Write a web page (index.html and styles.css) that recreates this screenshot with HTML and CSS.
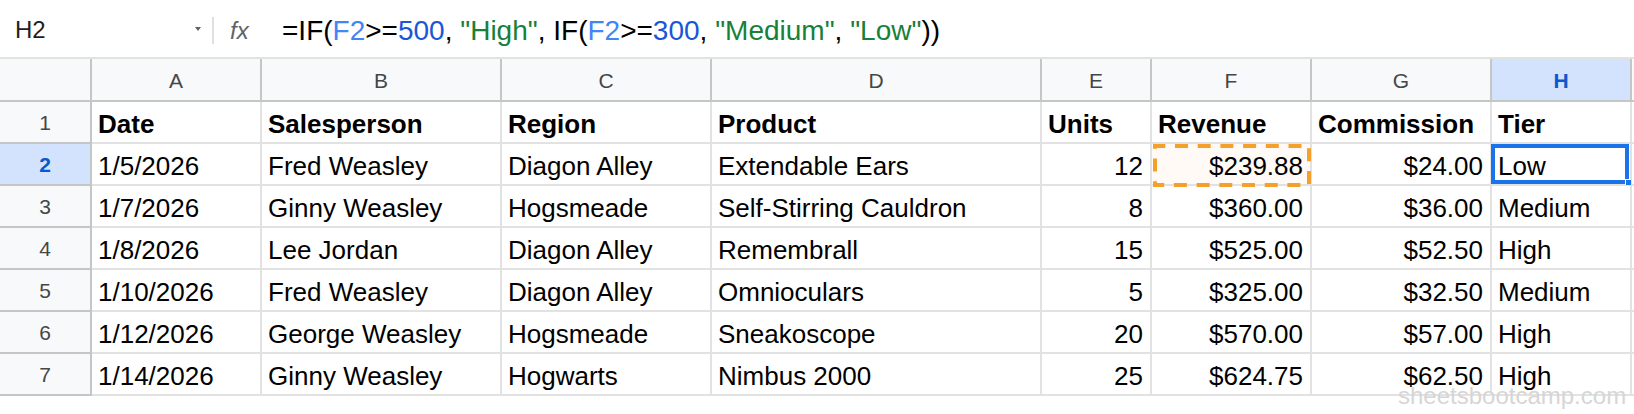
FILE: index.html
```html
<!DOCTYPE html>
<html>
<head>
<meta charset="utf-8">
<link rel="stylesheet" href="styles.css">
</head>
<body>
<div class="app">
  <div class="formula-bar">
    <div class="name-box"><span class="name">H2</span><span class="caret"></span></div>
    <div class="sep"></div>
    <div class="fx">fx</div>
    <div class="formula">=IF(<span class="ref">F2</span>&gt;=<span class="num">500</span>, <span class="str">"High"</span>, IF(<span class="ref">F2</span>&gt;=<span class="num">300</span>, <span class="str">"Medium"</span>, <span class="str">"Low"</span>))</div>
  </div>
  <div class="grid">
    <div class="corner"></div>
    <div class="colhead">A</div>
    <div class="colhead">B</div>
    <div class="colhead">C</div>
    <div class="colhead">D</div>
    <div class="colhead">E</div>
    <div class="colhead">F</div>
    <div class="colhead">G</div>
    <div class="colhead selected">H</div>
    <div class="colhead rest"></div>

    <div class="rowhead">1</div>
    <div class="cell bold">Date</div>
    <div class="cell bold">Salesperson</div>
    <div class="cell bold">Region</div>
    <div class="cell bold">Product</div>
    <div class="cell bold">Units</div>
    <div class="cell bold">Revenue</div>
    <div class="cell bold">Commission</div>
    <div class="cell bold">Tier</div>
    <div class="cell rest"></div>

    <div class="rowhead selected">2</div>
    <div class="cell">1/5/2026</div>
    <div class="cell">Fred Weasley</div>
    <div class="cell">Diagon Alley</div>
    <div class="cell">Extendable Ears</div>
    <div class="cell num">12</div>
    <div class="cell num copied">$239.88<svg class="marquee" width="158" height="43" viewBox="0 0 158 43"><rect x="2" y="2" width="154" height="39" fill="none" stroke="#f5a02a" stroke-width="4" stroke-dasharray="13 9.7" stroke-dashoffset="2.7"/></svg></div>
    <div class="cell num">$24.00</div>
    <div class="cell active">Low<span class="sel-box"></span><span class="handle"></span></div>
    <div class="cell rest"></div>

    <div class="rowhead">3</div>
    <div class="cell">1/7/2026</div>
    <div class="cell">Ginny Weasley</div>
    <div class="cell">Hogsmeade</div>
    <div class="cell">Self-Stirring Cauldron</div>
    <div class="cell num">8</div>
    <div class="cell num">$360.00</div>
    <div class="cell num">$36.00</div>
    <div class="cell">Medium</div>
    <div class="cell rest"></div>

    <div class="rowhead">4</div>
    <div class="cell">1/8/2026</div>
    <div class="cell">Lee Jordan</div>
    <div class="cell">Diagon Alley</div>
    <div class="cell">Remembrall</div>
    <div class="cell num">15</div>
    <div class="cell num">$525.00</div>
    <div class="cell num">$52.50</div>
    <div class="cell">High</div>
    <div class="cell rest"></div>

    <div class="rowhead">5</div>
    <div class="cell">1/10/2026</div>
    <div class="cell">Fred Weasley</div>
    <div class="cell">Diagon Alley</div>
    <div class="cell">Omnioculars</div>
    <div class="cell num">5</div>
    <div class="cell num">$325.00</div>
    <div class="cell num">$32.50</div>
    <div class="cell">Medium</div>
    <div class="cell rest"></div>

    <div class="rowhead">6</div>
    <div class="cell">1/12/2026</div>
    <div class="cell">George Weasley</div>
    <div class="cell">Hogsmeade</div>
    <div class="cell">Sneakoscope</div>
    <div class="cell num">20</div>
    <div class="cell num">$570.00</div>
    <div class="cell num">$57.00</div>
    <div class="cell">High</div>
    <div class="cell rest"></div>

    <div class="rowhead">7</div>
    <div class="cell">1/14/2026</div>
    <div class="cell">Ginny Weasley</div>
    <div class="cell">Hogwarts</div>
    <div class="cell">Nimbus 2000</div>
    <div class="cell num">25</div>
    <div class="cell num">$624.75</div>
    <div class="cell num">$62.50</div>
    <div class="cell">High</div>
    <div class="cell rest"></div>
  </div>
  <div class="watermark">sheetsbootcamp.com</div>
</div>
</body>
</html>
```

FILE: styles.css
```css
html, body {
  margin: 0;
  padding: 0;
  background: #ffffff;
}

.app {
  position: relative;
  width: 1634px;
  height: 414px;
  overflow: hidden;
  font-family: "Liberation Sans", Arial, sans-serif;
  color: #000000;
}

/* ---------- formula bar ---------- */
.formula-bar {
  display: flex;
  align-items: center;
  height: 59px;
  box-sizing: border-box;
  padding-top: 4px;
  border-bottom: 2px solid #e1e3e1;
  white-space: nowrap;
}

.name-box {
  width: 212px;
  box-sizing: border-box;
  padding-left: 15px;
  display: flex;
  align-items: center;
  font-size: 24px;
  color: #1f1f1f;
}

.name {
  position: relative;
  top: -1px;
}

.caret {
  margin-left: auto;
  margin-right: 11px;
  margin-bottom: 3px;
  width: 0;
  height: 0;
  border-left: 3px solid transparent;
  border-right: 3px solid transparent;
  border-top: 4px solid #5f6368;
}

.sep {
  width: 2px;
  height: 27px;
  background: #e0e0e0;
}

.fx {
  margin-left: 16px;
  width: 52px;
  font-size: 24px;
  font-style: italic;
  color: #5f6368;
}

.formula {
  font-size: 28px;
  color: #000000;
}

.formula .ref { color: #4285f4; }
.formula .num { color: #1a56d6; }
.formula .str { color: #188038; }

/* ---------- grid ---------- */
.grid {
  display: grid;
  grid-template-columns: 92px 170px 240px 210px 330px 110px 160px 180px 140px 1fr;
  grid-template-rows: 43px repeat(7, 42px);
}

.corner,
.colhead,
.rowhead,
.cell {
  box-sizing: border-box;
  border-right: 2px solid #e2e2e2;
  border-bottom: 2px solid #e2e2e2;
  white-space: nowrap;
}

.corner {
  background: #f8f9fa;
  border-color: #c4c7c5;
}

.colhead {
  display: flex;
  align-items: flex-end;
  justify-content: center;
  padding-bottom: 7px;
  background: #f8f9fa;
  border-color: #c4c7c5;
  font-size: 21px;
  color: #444746;
}

.colhead.selected,
.rowhead.selected {
  background: #d3e3fd;
  color: #0b57d0;
  font-weight: bold;
}

.colhead.rest {
  border-right: none;
}

.rowhead {
  display: flex;
  align-items: flex-end;
  justify-content: center;
  padding-bottom: 7px;
  background: #f8f9fa;
  border-color: #c4c7c5;
  font-size: 21px;
  color: #444746;
}

.cell {
  position: relative;
  display: flex;
  align-items: flex-end;
  padding: 0 7px 3px 6px;
  font-size: 26px;
  line-height: 30px;
  overflow: visible;
}

.cell.bold {
  font-weight: bold;
}

.cell.num {
  justify-content: flex-end;
}

.cell.rest {
  border-right: none;
  padding: 0;
}

.cell.copied {
  background: #fffaf5;
}

.marquee {
  position: absolute;
  left: 1px;
  top: 0;
}

.sel-box {
  position: absolute;
  left: -1px;
  top: 0;
  right: 1px;
  bottom: 0;
  border: 4px solid #1a73e8;
}

.handle {
  position: absolute;
  right: -1px;
  bottom: -1px;
  width: 5px;
  height: 5px;
  background: #1a73e8;
  border-left: 1px solid #ffffff;
  border-top: 1px solid #ffffff;
}

.watermark {
  position: absolute;
  left: 1398px;
  top: 392px;
  font-size: 24px;
  line-height: 8px;
  color: #d6d6d6;
  white-space: nowrap;
}
```
